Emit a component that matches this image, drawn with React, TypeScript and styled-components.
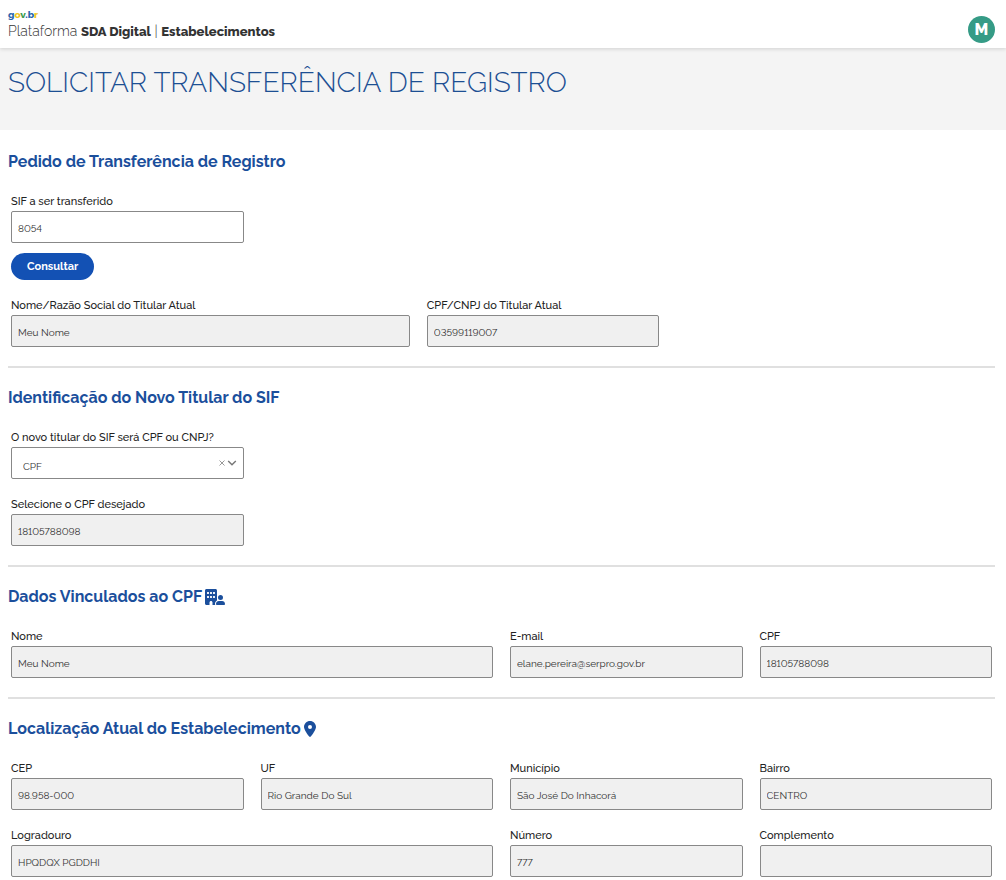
import React, { useId, useState } from "react";
import styled, { createGlobalStyle } from "styled-components";
import { FaBuildingUser, FaLocationDot } from "react-icons/fa6";

const GlobalStyle = createGlobalStyle`
  * { box-sizing: border-box; }
  body {
    margin: 0;
    background: #fff;
    color: #333;
    font-family: Raleway, Lato, "Open Sans", sans-serif;
    font-variant-numeric: lining-nums;
  }
  button, input, select { font-family: inherit; font-variant-numeric: inherit; }
`;

const Header = styled.header`
  position: relative;
  display: flex;
  align-items: center;
  justify-content: space-between;
  height: 48px;
  padding: 0 11px 0 8px;
  background: #fff;
  box-shadow: 0 1px 4px rgba(0, 0, 0, 0.15);
`;

const Brand = styled.div`
  display: flex;
  flex-direction: column;
  padding-top: 2px;
`;

const Logo = styled.a`
  font-size: 10px;
  line-height: 12px;
  font-weight: 800;
  text-decoration: none;
`;

const LogoLetter = styled.span<{ $color: string }>`
  color: ${(p) => p.$color};
`;

const Product = styled.div`
  font-size: 14px;
  line-height: 20px;
  font-weight: 300;
  b { font-size: 13px; font-weight: 800; }
`;

const Avatar = styled.button`
  width: 27px;
  height: 27px;
  margin-top: 11px;
  padding: 0;
  border: 0;
  border-radius: 50%;
  background: #359b86;
  color: #fff;
  font-size: 16px;
  font-weight: 800;
  line-height: 27px;
`;

const Banner = styled.div`
  padding: 15px 8px 27px;
  background: #f4f4f4;
`;

const Title = styled.h1`
  margin: 0;
  color: #1c4f93;
  font-size: 28px;
  line-height: 40px;
  font-weight: 300;
  text-transform: uppercase;
`;

const Main = styled.main`
  padding: 2px 11px 3px 8px;
`;

const Section = styled.section`
  padding: 17px 0 19px;
  & + & { border-top: 2px solid #e0e0e0; }
  &:last-child { padding-bottom: 0; }
`;

const Heading = styled.h2`
  display: flex;
  align-items: center;
  gap: 3px;
  margin: 0 0 17px;
  color: #1b4f9c;
  font-size: 16px;
  line-height: 26px;
  font-weight: 700;
`;

const BuildingIcon = styled(FaBuildingUser)`
  width: 20px;
  height: 16px;
`;

const PinIcon = styled(FaLocationDot)`
  width: 12px;
  height: 16px;
`;

const Grid = styled.div`
  display: grid;
  grid-template-columns: repeat(12, minmax(0, 1fr));
  gap: 16px 17px;
  padding: 0 3px;
`;

const Cell = styled.div<{ $span: number; $newRow?: boolean }>`
  grid-column: ${(p) => (p.$newRow ? "1 / " : "")}span ${(p) => p.$span};
  display: flex;
  flex-direction: column;
`;

const Label = styled.label`
  padding-top: 1px;
  font-size: 11px;
  line-height: 18px;
  font-weight: 500;
  color: #222;
`;

const Input = styled.input`
  width: 100%;
  height: 32px;
  padding: 3px 6px 0;
  border: 1px solid #888;
  border-radius: 2px;
  background: #fff;
  color: #333;
  font-size: 10px;
  font-weight: 400;
  &:read-only { background: #f0f0f0; }
`;

const SelectBox = styled.div`
  display: flex;
  align-items: center;
  height: 32px;
  padding-right: 6px;
  border: 1px solid #888;
  border-radius: 2px;
  color: #777;
`;

const Select = styled.select`
  flex: 1;
  min-width: 0;
  height: 30px;
  padding: 6px 11px 0;
  border: 0;
  appearance: none;
  background: transparent;
  color: #333;
  font-size: 10px;
  font-weight: 400;
`;

const ClearButton = styled.button`
  display: flex;
  padding: 2px;
  border: 0;
  background: none;
  color: #999;
`;

const Submit = styled.button`
  height: 27px;
  margin: 10px 3px 16px;
  padding: 0 16px;
  border: 0;
  border-radius: 14px;
  background: #1351b4;
  color: #fff;
  font-size: 11px;
  font-weight: 700;
`;

type FieldProps = { label: string; value: string; span?: number; newRow?: boolean; editable?: boolean };

function Field({ label, value, span = 3, newRow, editable }: FieldProps) {
  const id = useId();
  return (
    <Cell $span={span} $newRow={newRow}>
      <Label htmlFor={id}>{label}</Label>
      <Input id={id} defaultValue={value} readOnly={!editable} />
    </Cell>
  );
}

function HolderTypeField() {
  const id = useId();
  const [value, setValue] = useState("CPF");
  return (
    <Cell $span={3}>
      <Label htmlFor={id}>O novo titular do SIF será CPF ou CNPJ?</Label>
      <SelectBox>
        <Select id={id} value={value} onChange={(e) => setValue(e.target.value)}>
          <option value="" />
          <option value="CPF">CPF</option>
          <option value="CNPJ">CNPJ</option>
        </Select>
        <ClearButton type="button" aria-label="Limpar" onClick={() => setValue("")}>
          <svg width="6" height="6" viewBox="0 0 6 6" fill="none" stroke="currentColor">
            <path d="M.5.5l5 5M5.5.5l-5 5" />
          </svg>
        </ClearButton>
        <svg width="10" height="6" viewBox="0 0 10 6" fill="none" stroke="currentColor" strokeWidth="1.4" aria-hidden="true">
          <path d="M1.2 1l3.8 3.8L8.8 1" />
        </svg>
      </SelectBox>
    </Cell>
  );
}

const logo: [string, string][] = [
  ["g", "#2864ae"],
  ["o", "#f0c420"],
  ["v", "#3a9a4a"],
  [".", "#2864ae"],
  ["b", "#2864ae"],
  ["r", "#f0c420"],
];

export default function App() {
  return (
    <>
      <GlobalStyle />
      <Header>
        <Brand>
          <Logo href="#" aria-label="gov.br">
            {logo.map(([letter, color]) => (
              <LogoLetter key={letter} $color={color}>{letter}</LogoLetter>
            ))}
          </Logo>
          <Product>
            Plataforma <b>SDA Digital</b> | <b>Estabelecimentos</b>
          </Product>
        </Brand>
        <Avatar type="button">M</Avatar>
      </Header>
      <Banner>
        <Title>Solicitar Transferência de Registro</Title>
      </Banner>
      <Main>
        <Section>
          <Heading>Pedido de Transferência de Registro</Heading>
          <Grid>
            <Field label="SIF a ser transferido" value="8054" editable />
          </Grid>
          <Submit type="button">Consultar</Submit>
          <Grid>
            <Field label="Nome/Razão Social do Titular Atual" value="Meu Nome" span={5} />
            <Field label="CPF/CNPJ do Titular Atual" value="03599119007" />
          </Grid>
        </Section>
        <Section>
          <Heading>Identificação do Novo Titular do SIF</Heading>
          <Grid>
            <HolderTypeField />
            <Field label="Selecione o CPF desejado" value="18105788098" newRow />
          </Grid>
        </Section>
        <Section>
          <Heading>
            Dados Vinculados ao CPF <BuildingIcon aria-hidden />
          </Heading>
          <Grid>
            <Field label="Nome" value="Meu Nome" span={6} />
            <Field label="E-mail" value="elane.pereira@serpro.gov.br" />
            <Field label="CPF" value="18105788098" />
          </Grid>
        </Section>
        <Section>
          <Heading>
            Localização Atual do Estabelecimento <PinIcon aria-hidden />
          </Heading>
          <Grid>
            <Field label="CEP" value="98.958-000" />
            <Field label="UF" value="Rio Grande Do Sul" />
            <Field label="Município" value="São José Do Inhacorá" />
            <Field label="Bairro" value="CENTRO" />
            <Field label="Logradouro" value="HPQDQX PGDDHI" span={6} />
            <Field label="Número" value="777" />
            <Field label="Complemento" value="" />
          </Grid>
        </Section>
      </Main>
    </>
  );
}
